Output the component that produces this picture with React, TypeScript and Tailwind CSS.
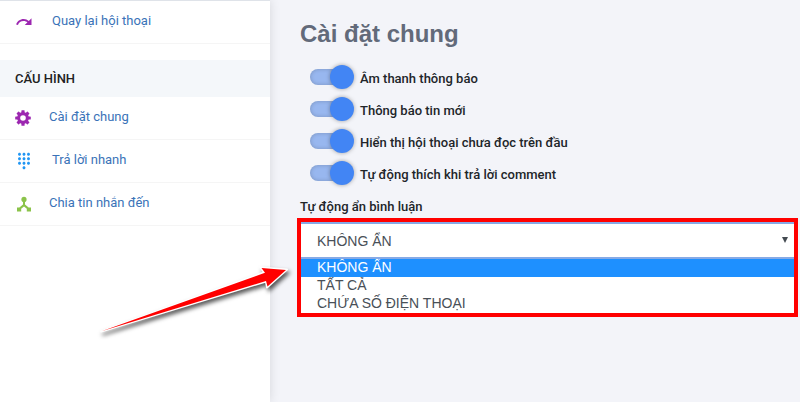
import React, { useState } from 'react';
import { MdDialpad, MdRedo } from 'react-icons/md';

const OPTIONS = ['KHÔNG ẨN', 'TẤT CẢ', 'CHỨA SỐ ĐIỆN THOẠI'];

const SWITCHES = [
  { id: 'sound', label: 'Âm thanh thông báo' },
  { id: 'notify', label: 'Thông báo tin mới' },
  { id: 'unread-first', label: 'Hiển thị hội thoại chưa đọc trên đầu' },
  { id: 'auto-like', label: 'Tự động thích khi trả lời comment' },
];

function GearIcon() {
  return (
    <svg viewBox="0 0 16 16" className="w-4 h-4" aria-hidden="true">
      <g fill="#9c27b0">
        <rect x="6.4" y="0.2" width="3.2" height="15.6" rx="0.6" />
        <rect x="6.4" y="0.2" width="3.2" height="15.6" rx="0.6" transform="rotate(45 8 8)" />
        <rect x="6.4" y="0.2" width="3.2" height="15.6" rx="0.6" transform="rotate(90 8 8)" />
        <rect x="6.4" y="0.2" width="3.2" height="15.6" rx="0.6" transform="rotate(135 8 8)" />
        <circle cx="8" cy="8" r="5.9" />
      </g>
      <circle cx="8" cy="8" r="2.8" fill="#fff" />
    </svg>
  );
}

function HubIcon() {
  return (
    <svg viewBox="0 0 18 18" className="w-[18px] h-[18px]" fill="#8bc34a" aria-hidden="true">
      <circle cx="9" cy="4.4" r="2.6" />
      <path d="M8 6H10V9.6L13.6 12.6H16V16.6H11.8V13.8L9 11.4L6.2 13.8V16.6H2V12.6H4.4L8 9.6Z" />
    </svg>
  );
}

interface NavItemProps {
  icon: React.ReactNode;
  label: string;
  narrow?: boolean;
}

function NavItem({ icon, label, narrow }: NavItemProps) {
  return (
    <a
      href="#"
      className="flex items-center h-[43px] pl-[15px] border-b border-[#f5f5f5] text-[#3a73b8]"
    >
      <span className={narrow ? 'w-[34px] shrink-0' : 'w-[37px] shrink-0'}>{icon}</span>
      <span className="pb-[3px]">{label}</span>
    </a>
  );
}

function Sidebar() {
  return (
    <aside className="w-[270px] shrink-0 bg-white border-t border-[#dfe3e9] shadow-[0_0_10px_rgba(0,0,0,0.12)] text-[13px] leading-4">
      <NavItem icon={<MdRedo size={18} color="#9c27b0" />} label="Quay lại hội thoại" />
      <h2 className="mt-4 h-[37px] flex items-center pl-[15px] bg-[#f4f7fa] text-[#222] font-medium">
        CẤU HÌNH
      </h2>
      <nav>
        <NavItem icon={<GearIcon />} label="Cài đặt chung" narrow />
        <NavItem icon={<MdDialpad size={18} color="#2196f3" />} label="Trả lời nhanh" />
        <NavItem icon={<HubIcon />} label="Chia tin nhắn đến" narrow />
      </nav>
    </aside>
  );
}

function Switch({ id, label }: { id: string; label: string }) {
  const [on, setOn] = useState(true);

  return (
    <div className="flex items-center h-8 pl-[10px]">
      <input
        id={id}
        type="checkbox"
        checked={on}
        onChange={() => setOn(!on)}
        className="appearance-none relative w-10 h-4 rounded-full bg-gray-300 cursor-pointer checked:bg-[#98b7ef] shadow-[inset_0_0_4px_rgba(0,0,0,0.2)] before:absolute before:content-[''] before:-top-1 before:-left-1 before:w-6 before:h-6 before:rounded-full before:bg-white before:shadow-[0_0_4px_rgba(0,0,0,0.35)] checked:before:left-5 checked:before:bg-[#4285f4]"
      />
      <label htmlFor={id} className="pl-[10px] pt-[3px] cursor-pointer">
        {label}
      </label>
    </div>
  );
}

function HideCommentField() {
  const [value, setValue] = useState(OPTIONS[0]);

  return (
    <div>
      <label htmlFor="hide-comment" className="block leading-4">
        Tự động ẩn bình luận
      </label>
      <div className="mt-[3px] -ml-[3px] border-4 border-[#ff0000] bg-white font-['Liberation_Sans',sans-serif] font-normal text-sm text-[#495057]">
        <div className="relative">
          <select
            id="hide-comment"
            value={value}
            onChange={(e) => setValue(e.target.value)}
            className="appearance-none block w-full h-[37px] pl-4 bg-white border-y-2 border-[#86aae6] outline-none"
          >
            {OPTIONS.map((option) => (
              <option key={option}>{option}</option>
            ))}
          </select>
          <svg
            viewBox="0 0 6 6"
            className="absolute right-[6px] top-[15px] w-[6px] h-[6px] pointer-events-none"
            aria-hidden="true"
          >
            <path d="M0 0H6L3 6Z" fill="#444b52" />
          </svg>
        </div>
        <ul role="listbox" aria-label="Tự động ẩn bình luận">
          {OPTIONS.map((option) => (
            <li
              key={option}
              role="option"
              aria-selected={option === value}
              onClick={() => setValue(option)}
              className={`h-[18px] pl-4 leading-4 cursor-default ${
                option === value ? 'bg-[#1e90ff] text-white' : ''
              }`}
            >
              {option}
            </li>
          ))}
        </ul>
      </div>
    </div>
  );
}

// Arrow that points at the opened list
function PointerArrow() {
  return (
    <svg
      viewBox="0 0 220 100"
      className="absolute left-[90px] top-[250px] w-[220px] h-[100px] pointer-events-none"
      aria-hidden="true"
    >
      <g className="drop-shadow-[2px_3px_2px_rgba(0,0,0,0.65)]">
        <path
          d="M11 81.5L174 22.5L170.5 17.5L197 19.5L177 37.5L176 31.5Z"
          fill="#fff"
          stroke="#fff"
          strokeWidth="2"
          strokeLinejoin="round"
        />
        <path d="M11.5 81.3L175 22.8L171.5 18L196 20L177.5 36.5L176 31Z" fill="#ff0000" />
      </g>
    </svg>
  );
}

export default function App() {
  return (
    <div className="relative flex min-h-screen bg-[#f3f4f9] font-['Roboto',sans-serif]">
      <Sidebar />
      <main className="grow min-w-0 pl-[30px] pr-[2px] pt-4 text-[13px] leading-4 font-medium text-[#212529]">
        <h1 className="mb-[9px] font-['Liberation_Sans',sans-serif] font-bold text-2xl leading-9 text-[#626a7a]">
          Cài đặt chung
        </h1>
        {SWITCHES.map((item) => (
          <Switch key={item.id} id={item.id} label={item.label} />
        ))}
        <div className="pt-[10px]">
          <HideCommentField />
        </div>
      </main>
      <PointerArrow />
    </div>
  );
}
